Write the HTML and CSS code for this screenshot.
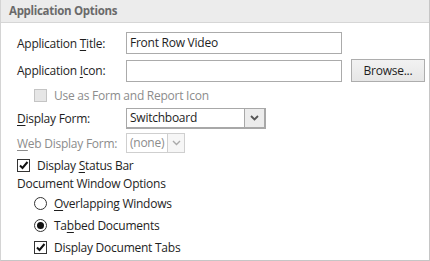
FILE: index.html
```html
<!DOCTYPE html>
<html lang="en">
<head>
    <meta charset="UTF-8">
    <title>Application Options</title>
    <link rel="stylesheet" href="styles.css">
</head>
<body>
    <div class="options-panel">
        <div class="panel-header">Application Options</div>

        <div class="panel-body">
            <div class="field-row row-title">
                <label class="field-label">Application <u>T</u>itle:</label>
                <div class="text-box wide">Front Row Video</div>
            </div>

            <div class="field-row row-icon">
                <label class="field-label">Application <u>I</u>con:</label>
                <div class="text-box wide"></div>
                <button class="browse-btn">Browse...</button>
            </div>

            <div class="check-row indent disabled row-useas">
                <span class="check-box"></span>
                <span>Use as Form and Report Icon</span>
            </div>

            <div class="field-row row-form">
                <label class="field-label"><u>D</u>isplay Form:</label>
                <div class="combo combo-form">
                    <span class="combo-text">Switchboard</span>
                    <span class="combo-arrow">
                        <svg width="9" height="6" viewBox="0 0 9 6"><path d="M1 1 L4.5 4.5 L8 1" fill="none" stroke="#555" stroke-width="1.8"/></svg>
                    </span>
                </div>
            </div>

            <div class="field-row row-web disabled">
                <label class="field-label"><u>W</u>eb Display Form:</label>
                <div class="combo combo-web">
                    <span class="combo-text">(none)</span>
                    <span class="combo-arrow">
                        <svg width="9" height="6" viewBox="0 0 9 6"><path d="M1 1 L4.5 4.5 L8 1" fill="none" stroke="#aaa" stroke-width="1.4"/></svg>
                    </span>
                </div>
            </div>

            <div class="check-row row-status">
                <span class="check-box checked">
                    <svg width="11" height="11" viewBox="0 0 11 11"><path d="M2 5.5 L4.5 8 L9.5 2" fill="none" stroke="#111" stroke-width="2"/></svg>
                </span>
                <span>Display <u>S</u>tatus Bar</span>
            </div>

            <div class="group-title">Document Window Options</div>

            <div class="check-row option-row indent">
                <span class="radio"></span>
                <span><u>O</u>verlapping Windows</span>
            </div>

            <div class="check-row option-row indent">
                <span class="radio selected"><span class="dot"></span></span>
                <span>Ta<u>b</u>bed Documents</span>
            </div>

            <div class="check-row option-row indent">
                <span class="check-box checked">
                    <svg width="11" height="11" viewBox="0 0 11 11"><path d="M2 5.5 L4.5 8 L9.5 2" fill="none" stroke="#111" stroke-width="2"/></svg>
                </span>
                <span>Display Document Tabs</span>
            </div>
        </div>
    </div>
</body>
</html>
```

FILE: styles.css
```css
body {
    margin: 0;
    background: #ffffff;
    font-family: "Segoe UI", "Open Sans", "Noto Sans", sans-serif;
    font-size: 12px;
    letter-spacing: -0.25px;
    color: #1e1e1e;
}

.options-panel {
    width: 428px;
    height: 260px;
    border: 1px solid #c6c6c6;
    border-top: none;
    border-left-color: #d4d4d4;
    box-sizing: content-box;
}

.panel-header {
    height: 21px;
    line-height: 19px;
    background: #ececec;
    border-top: 1px solid #ececec;
    border-bottom: 1px solid #d6d6d6;
    padding-left: 8px;
    font-weight: bold;
    font-size: 11.5px;
    letter-spacing: -0.3px;
    color: #6a6a6a;
}

.panel-body {
    padding: 9px 0 0 16px;
    display: flex;
    flex-direction: column;
}

.field-row {
    display: flex;
    align-items: center;
}

.field-label {
    width: 109px;
    flex-shrink: 0;
}

u {
    text-decoration: underline;
    text-underline-offset: 2px;
}

.text-box {
    height: 20px;
    line-height: 20px;
    border: 1px solid #ababab;
    padding-left: 3px;
    box-sizing: content-box;
}

.text-box.wide {
    width: 211px;
}

.row-icon {
    margin-top: 5px;
}

.browse-btn {
    margin-left: 9px;
    width: 74px;
    height: 23px;
    border: 1px solid #adadad;
    background: linear-gradient(#f2f2f2, #e6e6e6);
    font-family: inherit;
    font-size: 12px;
    letter-spacing: -0.25px;
    color: #1e1e1e;
    padding: 0;
}

.check-row {
    display: flex;
    align-items: center;
    gap: 7px;
    height: 21px;
}

.indent {
    padding-left: 17px;
}

.row-useas {
    margin-top: 3px;
}

.check-box {
    width: 11px;
    height: 11px;
    border: 1px solid #333;
    background: #fff;
    display: flex;
    align-items: center;
    justify-content: center;
}

.disabled {
    color: #8c8c8c;
}

.disabled .check-box {
    border-color: #c4c4c4;
    background: #e6e6e6;
}

.row-form {
    margin-top: 2px;
}

.combo {
    display: flex;
    height: 18px;
    border: 1px solid #a8a8a8;
    line-height: 18px;
}

.combo-form {
    width: 137px;
    border-width: 1px 2px 2px 1px;
}

.combo-text {
    flex: 1;
    padding-left: 3px;
}

.combo-arrow {
    width: 19px;
    background: #ececec;
    border-left: 1px solid #a8a8a8;
    display: flex;
    align-items: center;
    justify-content: center;
}

.row-web {
    margin-top: 4px;
}

.combo-web {
    width: 57px;
    border-color: #cfcfcf;
}

.combo-web .combo-arrow {
    width: 16px;
    background: #f6f6f6;
    border-left-color: #cfcfcf;
}

.row-status {
    margin-top: 2px;
}

.group-title {
    height: 16px;
    line-height: 16px;
}

.option-row {
    height: 22px;
}

.radio {
    width: 11px;
    height: 11px;
    border: 1px solid #333;
    border-radius: 50%;
    display: flex;
    align-items: center;
    justify-content: center;
}

.radio .dot {
    width: 7px;
    height: 7px;
    border-radius: 50%;
    background: #111;
}
```
